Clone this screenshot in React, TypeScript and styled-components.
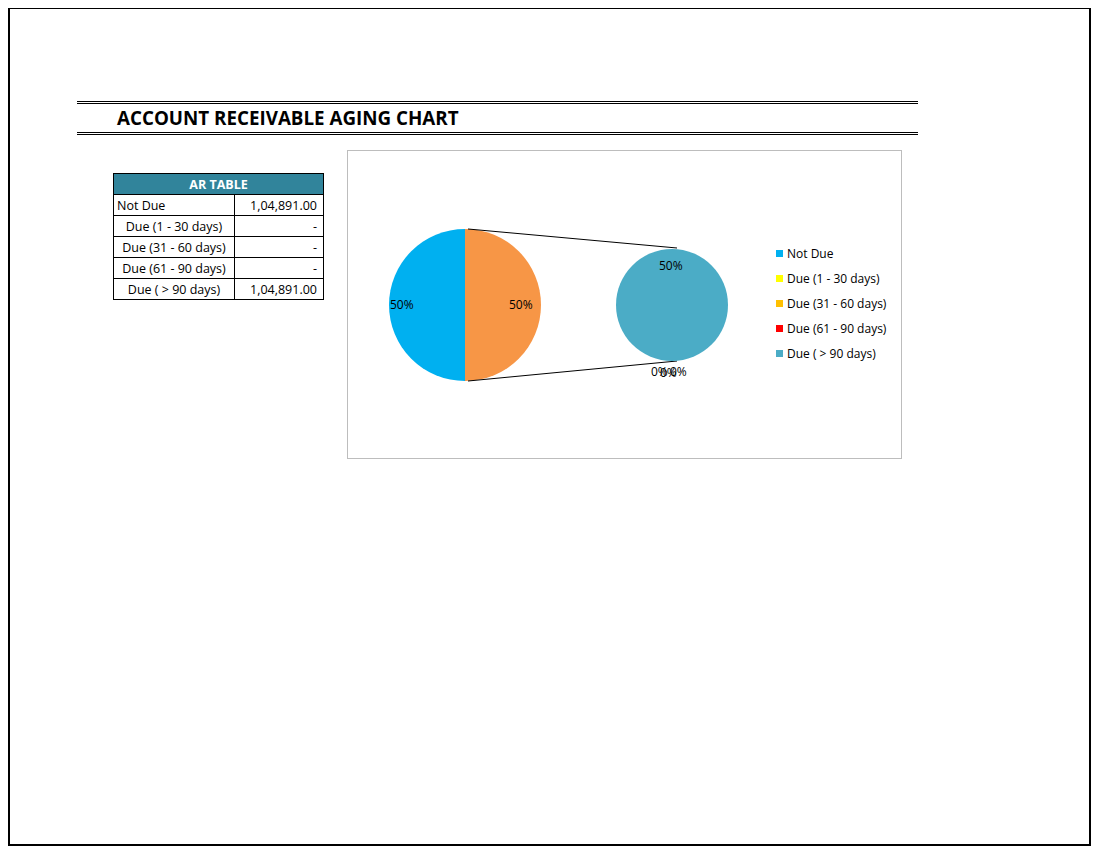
import React from 'react';
import styled, { createGlobalStyle } from 'styled-components';

const Global = createGlobalStyle`
  body { margin: 0; background: #fff; font-family: "Open Sans", "Liberation Sans", sans-serif; }
`;

const Page = styled.div`
  box-sizing: border-box;
  margin: 8px 5px 0 8px;
  width: 1083px;
  height: 838px;
  border: 2px solid #000;
  border-top-width: 1px;
  padding: 92px 0 0 67px;
`;

const TitleBar = styled.div`
  width: 841px;
  border-top: 3px double #000;
  border-bottom: 3px double #000;
  padding: 2px 0 1px 40px;
  box-sizing: border-box;
  font-weight: 700;
  font-size: 18.8px;
  line-height: 25px;
`;

const Body = styled.div`
  display: flex;
  align-items: flex-start;
  margin-top: 15px;
`;

const Table = styled.table`
  border-collapse: collapse;
  margin: 23px 0 0 36px;
  font-size: 12.5px;
  td, th { border: 1px solid #000; height: 20px; padding: 0 3px; white-space: nowrap; }
`;

const Head = styled.th`
  background: #31849b;
  color: #fff;
  font-size: 12.5px;
`;

const Label = styled.td<{ left?: boolean }>`
  width: 114px;
  text-align: ${(p) => (p.left ? 'left' : 'center')};
`;

const Value = styled.td`
  width: 79px;
  text-align: right;
  padding-right: 6px !important;
`;

const Chart = styled.div`
  display: flex;
  margin-left: 23px;
  width: 555px;
  height: 309px;
  box-sizing: border-box;
  border: 1.5px solid #bdbdbd;
`;

const Legend = styled.div`
  display: flex;
  flex-direction: column;
  gap: 7px;
  padding-top: 93px;
  font-size: 12px;
`;

const LegendItem = styled.div`
  display: flex;
  align-items: center;
  gap: 4px;
  height: 18px;
`;

const Swatch = styled.span<{ c: string }>`
  width: 7px;
  height: 7px;
  background: ${(p) => p.c};
`;

const rows = [
  ['Due (1 - 30 days)', '-'],
  ['Due (31 - 60 days)', '-'],
  ['Due (61 - 90 days)', '-'],
  ['Due ( > 90 days)', '1,04,891.00'],
];

const legend: [string, string][] = [
  ['#00b0f0', 'Not Due'],
  ['#ffff00', 'Due (1 - 30 days)'],
  ['#ffc000', 'Due (31 - 60 days)'],
  ['#ff0000', 'Due (61 - 90 days)'],
  ['#4bacc6', 'Due ( > 90 days)'],
];

const Pies = () => (
  <svg width="428" height="306" viewBox="0 0 428 306" style={{ fontFamily: 'Open Sans, sans-serif', fontSize: 12 }}>
    <path d="M117 78 A76 76 0 0 0 117 230 Z" fill="#00b0f0" />
    <path d="M117 78 A76 76 0 0 1 117 230 Z" fill="#f79646" />
    <line x1="120" y1="78" x2="329" y2="97" stroke="#000" />
    <line x1="120" y1="230" x2="329" y2="210" stroke="#000" />
    <circle cx="324" cy="154" r="56" fill="#4bacc6" />
    <text x="42" y="158">50%</text>
    <text x="161" y="158">50%</text>
    <text x="311" y="119">50%</text>
    <text x="303" y="225">0%</text>
    <text x="312" y="226">0%</text>
    <text x="322" y="225">0%</text>
  </svg>
);

export default function App() {
  return (
    <>
      <Global />
      <Page>
        <TitleBar>ACCOUNT RECEIVABLE AGING CHART</TitleBar>
        <Body>
          <Table>
            <thead>
              <tr><Head colSpan={2}>AR TABLE</Head></tr>
            </thead>
            <tbody>
              <tr><Label left>Not Due</Label><Value>1,04,891.00</Value></tr>
              {rows.map(([l, v]) => (
                <tr key={l}><Label>{l}</Label><Value>{v}</Value></tr>
              ))}
            </tbody>
          </Table>
          <Chart>
            <Pies />
            <Legend>
              {legend.map(([c, t]) => (
                <LegendItem key={t}><Swatch c={c} />{t}</LegendItem>
              ))}
            </Legend>
          </Chart>
        </Body>
      </Page>
    </>
  );
}
